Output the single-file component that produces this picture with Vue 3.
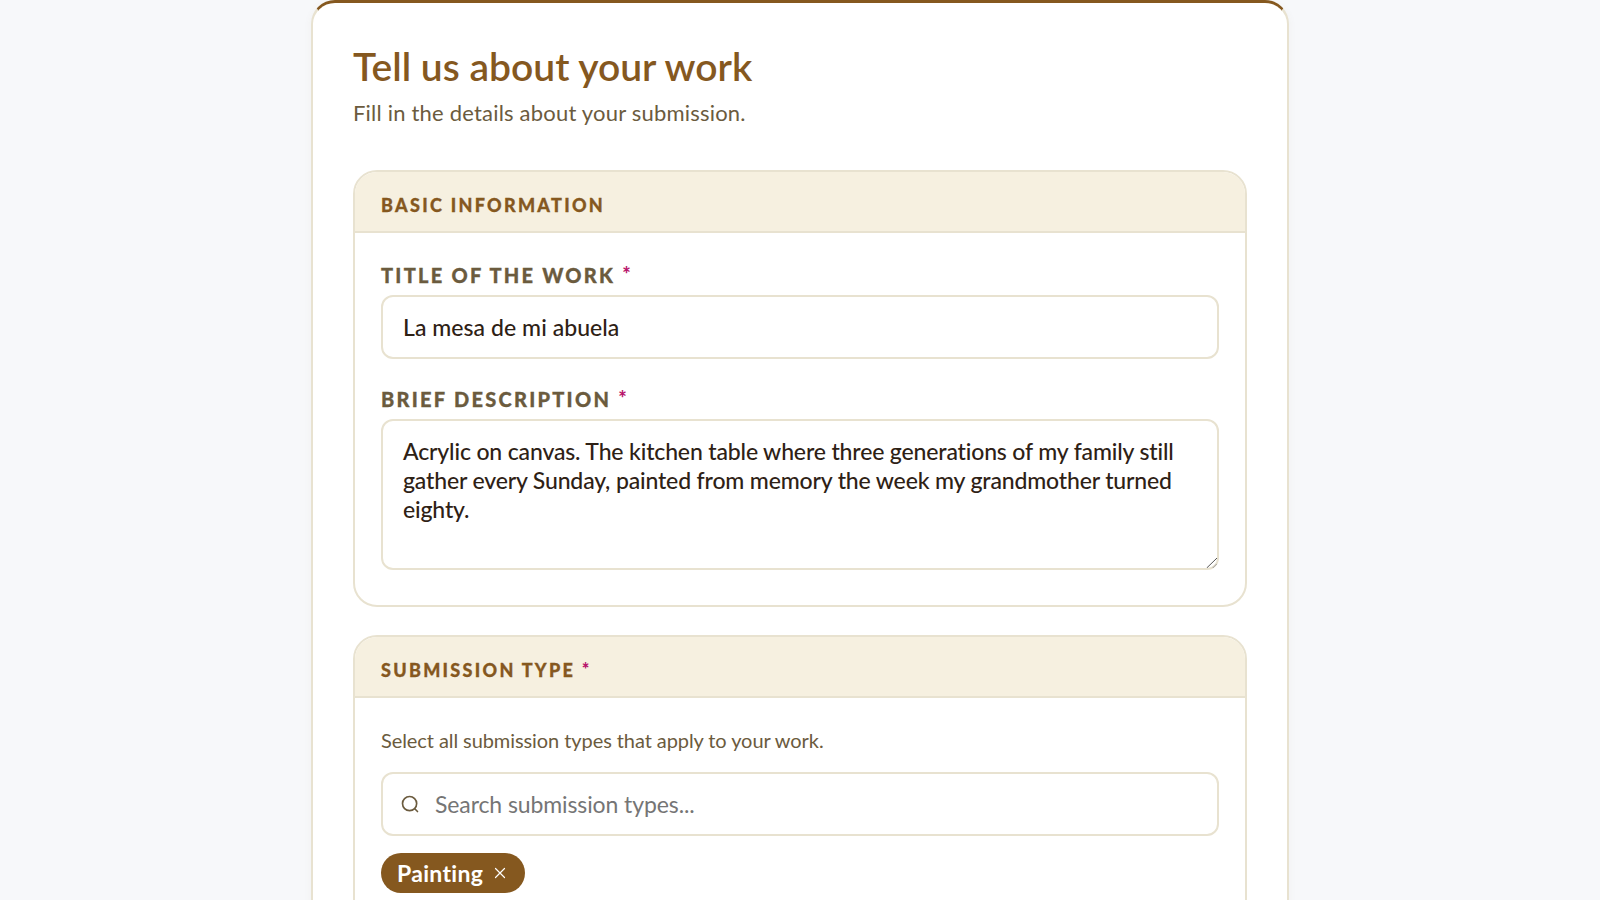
<template>
  <div class="page">
    <main class="card">
      <h1 class="title">Tell us about your work</h1>
      <p class="subtitle">Fill in the details about your submission.</p>

      <section class="panel">
        <h2 class="panel-head">Basic information</h2>
        <div class="panel-body">
          <label class="field">
            <span class="label">Title of the work <em>*</em></span>
            <input class="control" type="text" v-model="title" />
          </label>
          <label class="field">
            <span class="label">Brief description <em>*</em></span>
            <span class="area-wrap">
              <textarea class="control area" v-model="description"></textarea>
              <svg class="grip" viewBox="0 0 14 14" fill="none" stroke-width="1">
                <path d="M3.7 14L14 4" stroke="#555" />
                <path d="M9.7 14L14 9.7" stroke="#999" />
              </svg>
            </span>
          </label>
        </div>
      </section>

      <section class="panel">
        <h2 class="panel-head">Submission type <em>*</em></h2>
        <div class="panel-body">
          <p class="hint">Select all submission types that apply to your work.</p>
          <div class="search">
            <svg class="search-icon" viewBox="0 0 24 24" fill="none" stroke="currentColor" stroke-width="2" stroke-linecap="round">
              <circle cx="11.5" cy="11.5" r="8.5" />
              <path d="M18 18l3 3" />
            </svg>
            <input class="search-input" type="text" placeholder="Search submission types..." />
          </div>
          <div class="tags">
            <span v-for="tag in tags" :key="tag" class="tag">
              {{ tag }}
              <svg class="tag-x" viewBox="0 0 12 12" fill="none" stroke="currentColor" stroke-width="1.2" stroke-linecap="round">
                <path d="M1.5 1.5l9 9M10.5 1.5l-9 9" />
              </svg>
            </span>
          </div>
        </div>
      </section>
    </main>
  </div>
</template>

<script setup>
import { ref } from 'vue'

const title = ref('La mesa de mi abuela')
const description = ref('Acrylic on canvas. The kitchen table where three generations of my family still\ngather every Sunday, painted from memory the week my grandmother turned\neighty.')
const tags = ['Painting']
</script>

<style scoped>
.page {
  height: 900px;
  overflow: hidden;
  background: #f7f8fa;
  font-family: Lato, "Liberation Sans", sans-serif;
}

.card {
  box-sizing: border-box;
  width: 978px;
  margin: 0 auto;
  padding: 38px 40px 40px;
  background: #fff;
  border: 2px solid #e8e2d0;
  border-top: 3px solid #85581f;
  border-radius: 24px;
  box-shadow: 0 2px 8px rgba(120, 100, 60, 0.05);
}

.title {
  margin: 0;
  font-size: 39px;
  line-height: 50px;
  font-weight: 600;
  color: #85581f;
}

.subtitle {
  margin: 7px 0 0;
  font-size: 22px;
  line-height: 30px;
  color: #6b5b3e;
  letter-spacing: 0.2px;
}

.panel {
  margin-top: 28px;
  border: 2px solid #e8e2d0;
  border-radius: 24px;
  overflow: hidden;
}

.panel:first-of-type {
  margin-top: 42px;
}

.panel-head {
  margin: 0;
  padding: 22px 26px 15px;
  font-size: 18px;
  line-height: 22px;
  font-weight: 900;
  letter-spacing: 2.3px;
  text-transform: uppercase;
  color: #85581f;
  background: #f6f0e0;
  border-bottom: 2px solid #e8e2d0;
  -webkit-text-stroke: 0.3px currentColor;
}

.panel-head em,
.label em {
  display: inline-block;
  font-style: normal;
  color: #b8146c;
  transform: translateY(-1px);
  -webkit-text-stroke: 0;
}

.panel-body {
  padding: 28px 26px 35px;
  display: flex;
  flex-direction: column;
}

.field {
  display: flex;
  flex-direction: column;
  padding-top: 2px;
  margin-bottom: 26px;
}

.field:last-child {
  margin-bottom: 0;
}

.label {
  margin-bottom: 8px;
  font-size: 20px;
  line-height: 24px;
  font-weight: 900;
  letter-spacing: 2.26px;
  text-transform: uppercase;
  color: #6b5b3e;
  -webkit-text-stroke: 0.3px currentColor;
}

.control {
  box-sizing: border-box;
  width: 100%;
  height: 64px;
  padding: 0 20px;
  font-family: inherit;
  font-size: 23px;
  font-weight: 500;
  letter-spacing: 0.05px;
  color: #2e2115;
  background: #fff;
  border: 2px solid #e8e2d0;
  border-radius: 12px;
  outline: none;
}

.area-wrap {
  position: relative;
  display: block;
}

.area {
  display: block;
  height: 151px;
  padding: 16px 20px;
  line-height: 29px;
  letter-spacing: -0.15px;
  white-space: pre;
  resize: none;
  overflow: hidden;
}

.grip {
  position: absolute;
  right: 2px;
  bottom: 2px;
  width: 14px;
  height: 14px;
  pointer-events: none;
}

.hint {
  margin: 0 0 18px;
  font-size: 20px;
  line-height: 28px;
  letter-spacing: -0.08px;
  color: #6b5b3e;
}

.search {
  display: flex;
  align-items: center;
  gap: 15px;
  height: 64px;
  box-sizing: border-box;
  padding: 0 17px;
  border: 2px solid #e8e2d0;
  border-radius: 12px;
}

.search-icon {
  width: 20px;
  height: 20px;
  flex: none;
  color: #6b5b3e;
}

.search-input {
  flex: 1;
  border: 0;
  outline: none;
  padding: 0;
  font-family: inherit;
  font-size: 23px;
  letter-spacing: -0.1px;
  color: #333;
}

.search-input::placeholder {
  color: #757575;
}

.tags {
  display: flex;
  margin-top: 17px;
}

.tag {
  display: inline-flex;
  align-items: center;
  gap: 11px;
  height: 40px;
  padding: 0 19px 0 16px;
  border-radius: 20px;
  background: #85581f;
  color: #fff;
  font-size: 23px;
  font-weight: 700;
  letter-spacing: 0.3px;
}

.tag-x {
  width: 12px;
  height: 12px;
}
</style>

<style>
html,
body {
  margin: 0;
  background: #f7f8fa;
}
</style>
